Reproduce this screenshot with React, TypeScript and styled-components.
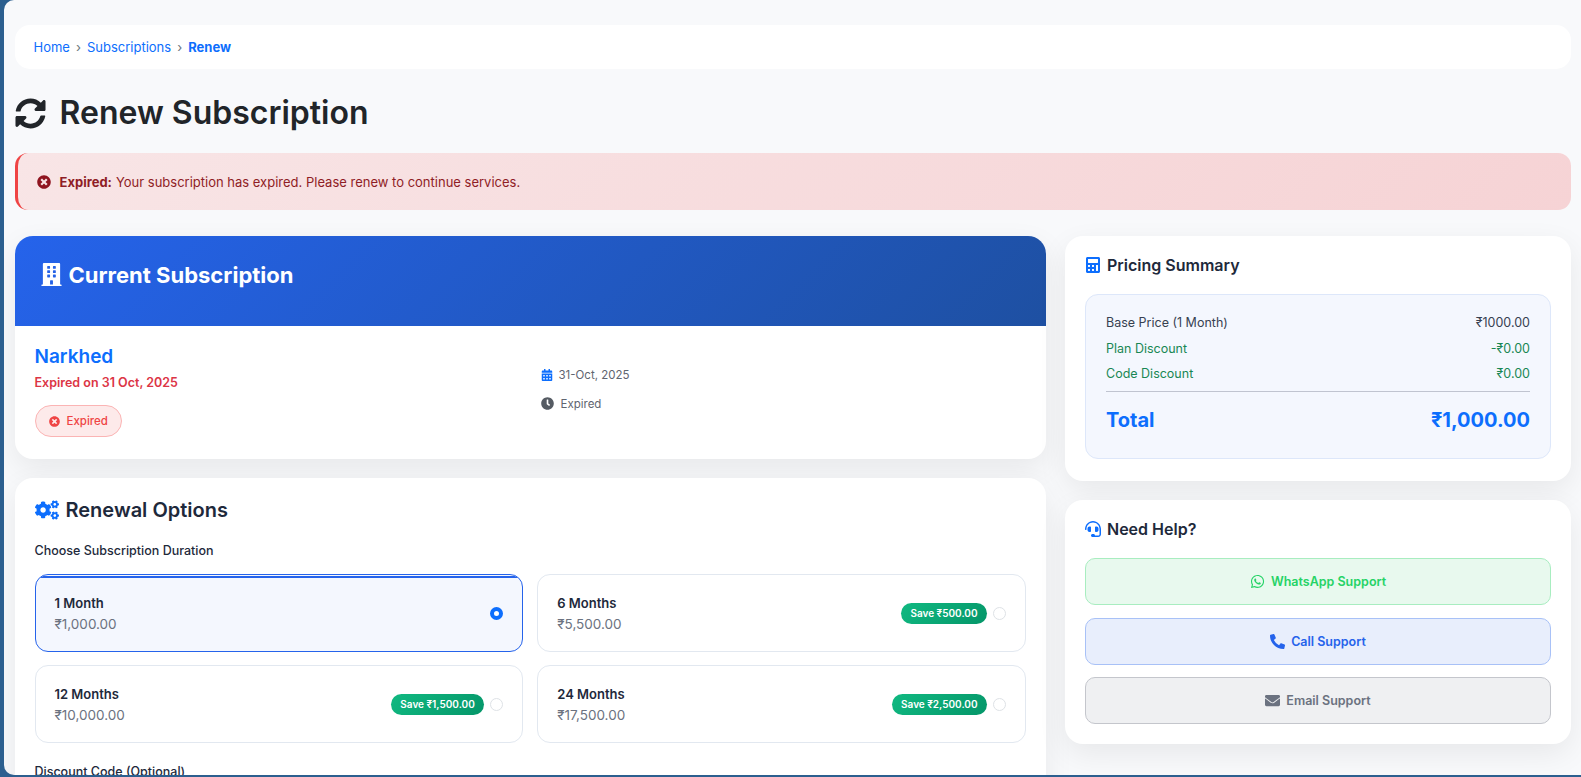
import React from "react";
import styled, { createGlobalStyle } from "styled-components";
import {
  FaSyncAlt, FaTimesCircle, FaBuilding, FaCalendarAlt, FaClock, FaCogs,
  FaCalculator, FaHeadset, FaWhatsapp, FaPhoneAlt, FaEnvelope,
} from "react-icons/fa";

const Global = createGlobalStyle`
  html, body { margin: 0; height: 100%; overflow: hidden; background: #2c5f8f; }
  body { font-family: Inter, "Liberation Sans", sans-serif; color: #1f2937; }
  #root { height: 100%; }
  * { box-sizing: border-box; }
`;

const Frame = styled.div`
  height: 775px;
  margin-left: 4px;
  background: #f8f9fb;
  border-radius: 10px 0 0 10px;
  overflow: hidden;
  padding: 25px 10px 0 10.5px;
`;

const Breadcrumb = styled.nav`
  height: 44px;
  background: #fff;
  border-radius: 15px;
  padding: 0 19px;
  display: flex;
  align-items: center;
  font-size: 13px;
  color: #0d6efd;
`;
const Crumb = styled.span<{ $active?: boolean }>`
  font-weight: ${(p) => (p.$active ? 700 : 400)};
`;
const Sep = styled.span`
  color: #6c757d;
  margin: 0 6px;
`;

const Title = styled.h1`
  margin: 30px 0 26px;
  height: 28px;
  display: flex;
  align-items: center;
  gap: 14px;
  font-size: 32px;
  line-height: 28px;
  font-weight: 600;
  color: #212529;
  svg { font-size: 31px; flex: none; }
`;

const Alert = styled.div`
  height: 57px;
  border-radius: 13px;
  border-left: 3px solid #ef4444;
  background: linear-gradient(135deg, #f8e5e6, #f6d3d5);
  color: #8f1d25;
  font-size: 13px;
  padding-left: 19px;
  display: flex;
  align-items: center;
  b { font-weight: 700; margin-right: 4px; }
  svg { font-size: 14px; margin-right: 9px; color: #8f1520; }
`;

const Columns = styled.div`
  display: grid;
  grid-template-columns: 1fr 506px;
  gap: 19px;
  margin-top: 26px;
`;
const Stack = styled.div`
  display: flex;
  flex-direction: column;
  min-width: 0;
`;

const Card = styled.section`
  background: #fff;
  border-radius: 18px;
  box-shadow: 0 10px 30px rgba(0, 0, 0, 0.07);
`;

const CurrentCard = styled(Card)`
  height: 223px;
  overflow: hidden;
  margin-bottom: 19px;
`;
const CurrentHeader = styled.div`
  height: 90px;
  background: linear-gradient(135deg, #2563eb, #1e50a2);
  color: #fff;
  padding: 25px 25px 0;
  display: flex;
  align-items: flex-start;
  gap: 6px;
  font-size: 22px;
  line-height: 28px;
  font-weight: 700;
  svg { font-size: 23px; margin-top: 2px; }
`;
const CurrentBody = styled.div`
  display: grid;
  grid-template-columns: 506px 1fr;
  padding: 19px 20px 0;
`;
const Company = styled.div`
  font-size: 19px;
  line-height: 24px;
  font-weight: 600;
  color: #0d6efd;
`;
const ExpiredOn = styled.div`
  margin-top: 5px;
  font-size: 12.5px;
  line-height: 18px;
  font-weight: 600;
  color: #dc3545;
`;
const StatusBadge = styled.span`
  margin-top: 13px;
  height: 32px;
  width: 87px;
  border-radius: 16px;
  background: #fdeaea;
  border: 1px solid #fbb4b4;
  color: #ef4444;
  font-size: 11.5px;
  font-weight: 500;
  display: flex;
  align-items: center;
  padding-left: 13px;
  gap: 7px;
  svg { font-size: 11px; }
`;
const MetaColumn = styled.div`
  padding-top: 22px;
  display: flex;
  flex-direction: column;
  gap: 14px;
`;
const Meta = styled.div<{ $muted?: boolean }>`
  display: flex;
  align-items: center;
  height: 15px;
  gap: ${(p) => (p.$muted ? "7px" : "6px")};
  font-size: 11.5px;
  color: #5f6570;
  svg { font-size: ${(p) => (p.$muted ? "13px" : "12px")}; color: ${(p) => (p.$muted ? "#555b63" : "#0d6efd")}; }
`;

const OptionsCard = styled(Card)`
  height: 400px;
  padding: 20px 20px 0;
`;
const CardHeading = styled.h2`
  margin: 0;
  display: flex;
  align-items: center;
  font-size: 20px;
  line-height: 24px;
  font-weight: 600;
  color: #1e293b;
  gap: 7px;
  svg { color: #0d6efd; font-size: 24px; }
`;
const Label = styled.div`
  margin-top: 20px;
  font-size: 12.5px;
  line-height: 18px;
  font-weight: 500;
  color: #1e293b;
`;
const OptionGrid = styled.div`
  margin-top: 14px;
  display: grid;
  grid-template-columns: 1fr 1fr;
  gap: 13px 14px;
`;
const Option = styled.div<{ $selected?: boolean }>`
  height: 78px;
  border-radius: 13px;
  border: 1px solid ${(p) => (p.$selected ? "#2563eb" : "#e2e8f0")};
  background: ${(p) => (p.$selected ? "#f4f7fe" : "#fff")};
  padding: 0 19px;
  display: flex;
  align-items: center;
  position: relative;
  overflow: hidden;
  &::before {
    content: "";
    display: ${(p) => (p.$selected ? "block" : "none")};
    position: absolute;
    top: 1px;
    left: 0;
    right: 0;
    height: 2px;
    background: #2563eb;
  }
`;
const OptionText = styled.div`
  flex: 1;
`;
const OptionName = styled.div`
  font-size: 13px;
  line-height: 18px;
  font-weight: 600;
  color: #1e293b;
`;
const OptionPrice = styled.div`
  margin-top: 3px;
  font-size: 13.5px;
  line-height: 18px;
  color: #6b7280;
`;
const Save = styled.span`
  height: 21px;
  border-radius: 11px;
  padding: 0 9.5px;
  background: linear-gradient(135deg, #10b981, #059669);
  color: #fff;
  font-size: 10px;
  font-weight: 600;
  display: flex;
  align-items: center;
  margin-right: 6px;
`;
const Radio = styled.span<{ $on?: boolean }>`
  width: 13px;
  height: 13px;
  border-radius: 50%;
  background: #fff;
  border: ${(p) => (p.$on ? "4px solid #0d6efd" : "1px solid #dee2e6")};
  flex: none;
`;

const SummaryCard = styled(Card)`
  height: 245px;
  padding: 17px 20px 0;
  margin-bottom: 19px;
`;
const SideHeading = styled(CardHeading)`
  font-size: 16px;
  gap: 6px;
  svg { font-size: 16px; }
`;
const PriceBox = styled.div`
  margin-top: 17px;
  height: 165px;
  border-radius: 13px;
  border: 1px solid #dde7fa;
  background: #f4f7fe;
  padding: 19px 20px 0;
`;
const Row = styled.div<{ $green?: boolean }>`
  display: flex;
  justify-content: space-between;
  font-size: 12.5px;
  line-height: 18px;
  margin-bottom: 7.5px;
  color: ${(p) => (p.$green ? "#198754" : "#374151")};
`;
const Total = styled.div`
  margin-top: 5.5px;
  border-top: 1px solid #c0c4d0;
  padding-top: 14px;
  display: flex;
  justify-content: space-between;
  font-size: 20px;
  line-height: 28px;
  font-weight: 700;
  color: #0d6efd;
`;

const HelpCard = styled(Card)`
  height: 244px;
  padding: 17px 20px 0;
`;
const HelpButtons = styled.div`
  margin-top: 17px;
  display: flex;
  flex-direction: column;
  gap: 12.5px;
`;
const HelpButton = styled.button<{ $bg: string; $line: string; $fg: string }>`
  height: 47px;
  border-radius: 10px;
  border: 1px solid ${(p) => p.$line};
  background: ${(p) => p.$bg};
  color: ${(p) => p.$fg};
  font-family: inherit;
  font-size: 12.5px;
  font-weight: 600;
  display: flex;
  align-items: center;
  justify-content: center;
  gap: 6px;
  svg { font-size: 15px; }
`;

export default function App() {
  return (
    <>
      <Global />
      <Frame>
        <Breadcrumb>
          <Crumb>Home</Crumb>
          <Sep>›</Sep>
          <Crumb>Subscriptions</Crumb>
          <Sep>›</Sep>
          <Crumb $active>Renew</Crumb>
        </Breadcrumb>
        <Title><FaSyncAlt />Renew Subscription</Title>
        <Alert>
          <FaTimesCircle />
          <b>Expired:</b> Your subscription has expired. Please renew to continue services.
        </Alert>
        <Columns>
          <Stack>
            <CurrentCard>
              <CurrentHeader><FaBuilding />Current Subscription</CurrentHeader>
              <CurrentBody>
                <div>
                  <Company>Narkhed</Company>
                  <ExpiredOn>Expired on 31 Oct, 2025</ExpiredOn>
                  <StatusBadge><FaTimesCircle />Expired</StatusBadge>
                </div>
                <MetaColumn>
                  <Meta><FaCalendarAlt />31-Oct, 2025</Meta>
                  <Meta $muted><FaClock />Expired</Meta>
                </MetaColumn>
              </CurrentBody>
            </CurrentCard>
            <OptionsCard>
              <CardHeading><FaCogs />Renewal Options</CardHeading>
              <Label>Choose Subscription Duration</Label>
              <OptionGrid>
                <Option $selected>
                  <OptionText><OptionName>1 Month</OptionName><OptionPrice>₹1,000.00</OptionPrice></OptionText>
                  <Radio $on />
                </Option>
                <Option>
                  <OptionText><OptionName>6 Months</OptionName><OptionPrice>₹5,500.00</OptionPrice></OptionText>
                  <Save>Save ₹500.00</Save><Radio />
                </Option>
                <Option>
                  <OptionText><OptionName>12 Months</OptionName><OptionPrice>₹10,000.00</OptionPrice></OptionText>
                  <Save>Save ₹1,500.00</Save><Radio />
                </Option>
                <Option>
                  <OptionText><OptionName>24 Months</OptionName><OptionPrice>₹17,500.00</OptionPrice></OptionText>
                  <Save>Save ₹2,500.00</Save><Radio />
                </Option>
              </OptionGrid>
              <Label>Discount Code (Optional)</Label>
            </OptionsCard>
          </Stack>
          <Stack>
            <SummaryCard>
              <SideHeading><FaCalculator />Pricing Summary</SideHeading>
              <PriceBox>
                <Row><span>Base Price (1 Month)</span><span>₹1000.00</span></Row>
                <Row $green><span>Plan Discount</span><span>-₹0.00</span></Row>
                <Row $green><span>Code Discount</span><span>₹0.00</span></Row>
                <Total><span>Total</span><span>₹1,000.00</span></Total>
              </PriceBox>
            </SummaryCard>
            <HelpCard>
              <SideHeading><FaHeadset />Need Help?</SideHeading>
              <HelpButtons>
                <HelpButton $bg="#e8f9ee" $line="#a8edc0" $fg="#25d366"><FaWhatsapp />WhatsApp Support</HelpButton>
                <HelpButton $bg="#e8eefc" $line="#a8c1f7" $fg="#2563eb"><FaPhoneAlt />Call Support</HelpButton>
                <HelpButton $bg="#eff0f2" $line="#c4c6cc" $fg="#6b7280"><FaEnvelope />Email Support</HelpButton>
              </HelpButtons>
            </HelpCard>
          </Stack>
        </Columns>
      </Frame>
    </>
  );
}
